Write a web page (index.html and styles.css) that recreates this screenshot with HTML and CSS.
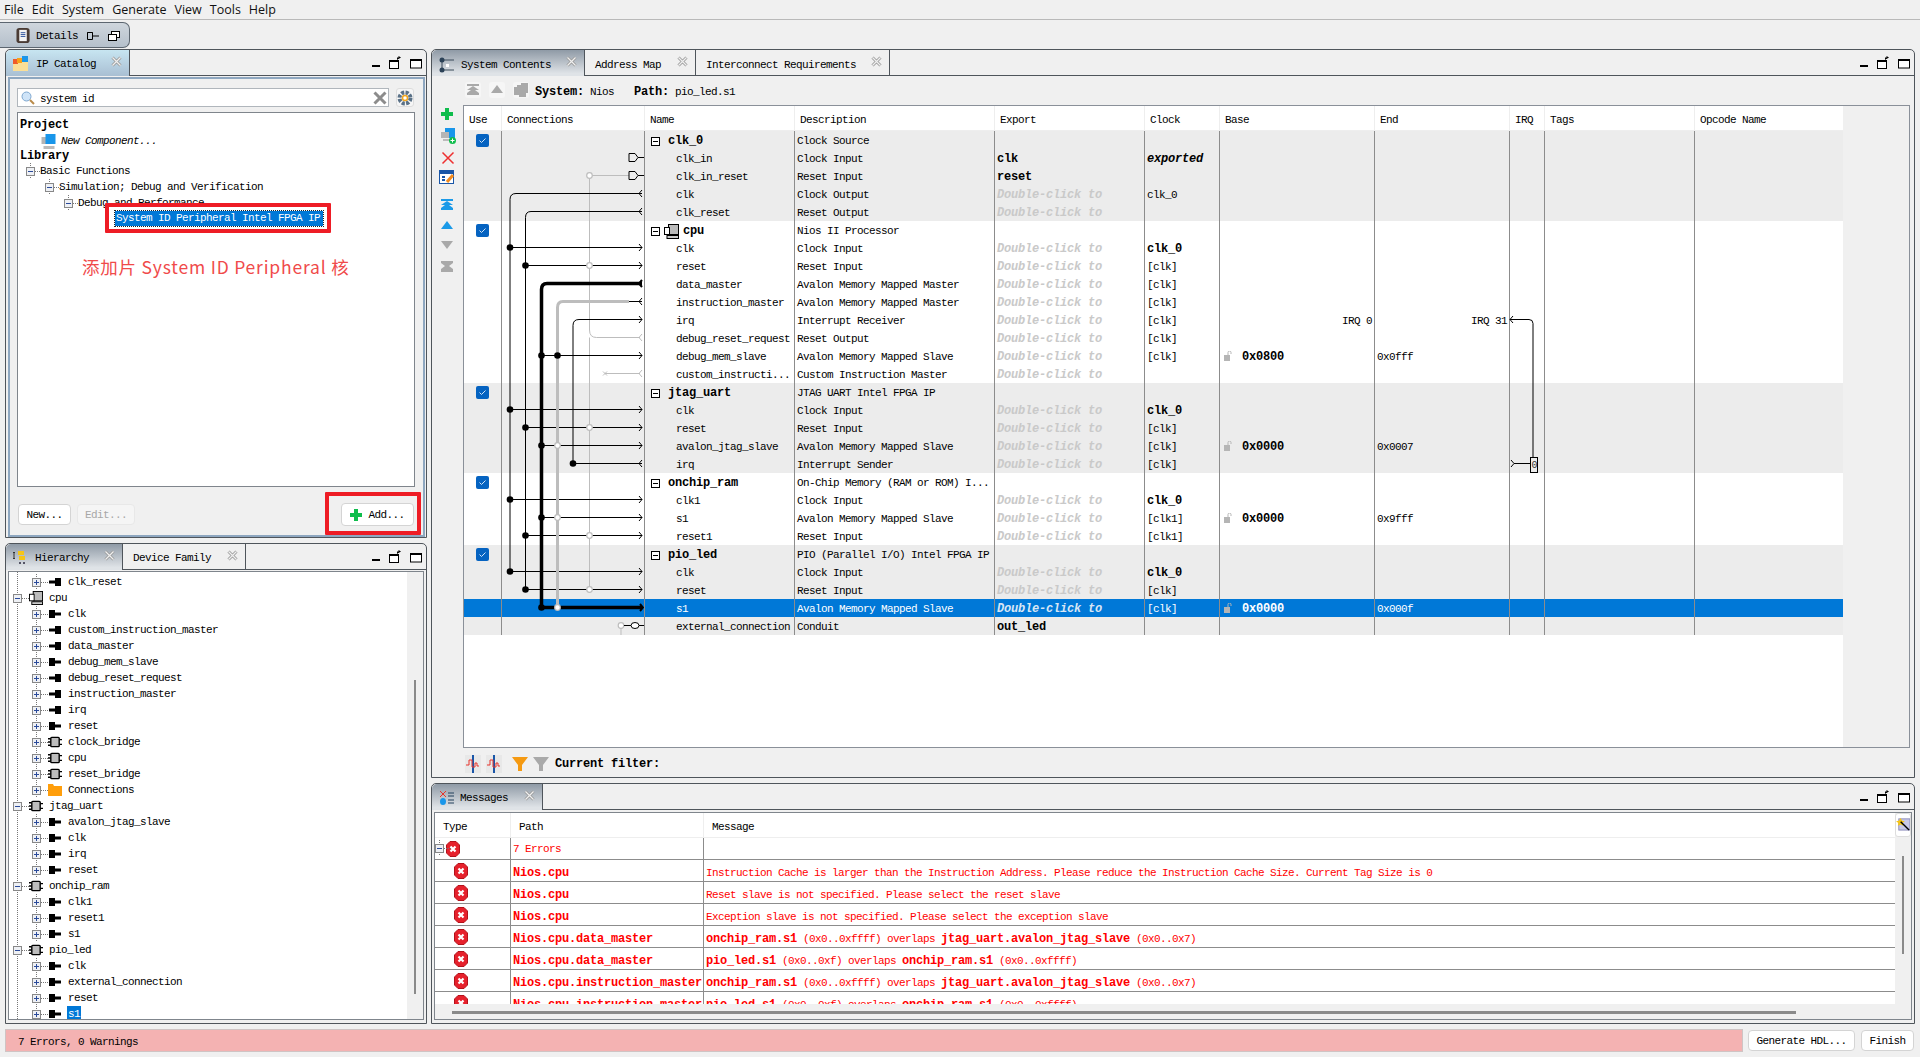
FILE: index.html
```html
<!DOCTYPE html>
<html lang="en">
<head>
<meta charset="utf-8">
<title>Platform Designer</title>
<link rel="stylesheet" href="styles.css">
</head>
<body>
<svg class="defs" aria-hidden="true">
  <symbol id="close" viewBox="0 0 11 11"><path d="M1.5 1.5l8 8M9.5 1.5l-8 8" stroke="#9a9a9a" stroke-width="3" fill="none"/><path d="M1.5 1.5l8 8M9.5 1.5l-8 8" stroke="#f0f0f0" stroke-width="1.2" fill="none"/></symbol>
  <symbol id="min" viewBox="0 0 10 14"><rect x="1" y="9" width="8" height="2"/></symbol>
  <symbol id="rest" viewBox="0 0 15 14"><rect x="1.5" y="4.5" width="9" height="8" fill="#fff" stroke="#000"/><rect x="1" y="4" width="10" height="2"/><path d="M9 4V1.5h3M10.5 0l2.5 1.5-2.5 1.5z"/></symbol>
  <symbol id="max" viewBox="0 0 13 14"><rect x=".5" y="3.5" width="11" height="8.5" fill="#fff" stroke="#000"/><rect y="3" width="12" height="2"/></symbol>
  <symbol id="plus" viewBox="0 0 12 12"><path d="M4 0h4v4h4v4H8v4H4V8H0V4h4z" fill="#0fbd4c"/></symbol>
  <symbol id="mbox" viewBox="0 0 9 9"><rect x=".5" y=".5" width="8" height="8" fill="#fff" stroke="#000"/><path d="M2 4.5h5" stroke="#000"/></symbol>
  <symbol id="tp" viewBox="0 0 16 16"><path d="M4.5 0v16M9 8.5h7" stroke="#777" stroke-dasharray="1 1" fill="none"/><rect x=".5" y="4.5" width="8" height="8" fill="#eef0f4" stroke="#888"/><path d="M2 8.5h5M4.5 6v5" stroke="#2a4a9a" fill="none"/></symbol>
  <symbol id="tm" viewBox="0 0 16 16"><path d="M4.5 0v16M9 8.5h7" stroke="#777" stroke-dasharray="1 1" fill="none"/><rect x=".5" y="4.5" width="8" height="8" fill="#eef0f4" stroke="#888"/><path d="M2 8.5h5" stroke="#2a4a9a" fill="none"/></symbol>
  <symbol id="pin" viewBox="0 0 14 14"><path d="M1 3h6v2.500h6v3H7V11H1z"/></symbol>
  <symbol id="pout" viewBox="0 0 14 14"><path d="M13 3H7v2.500H1v3h6V11h6z"/></symbol>
  <symbol id="comp" viewBox="0 0 15 14"><path d="M0 3.500h3M0 7h3M0 10.500h3M12 4.500h3M12 9.500h3" stroke="#000" stroke-width="1.500"/><rect x="3" y="2" width="9" height="10" rx="1" fill="#bdbdbd" stroke="#000" stroke-width="1.500"/></symbol>
  <symbol id="cpu" viewBox="0 0 15 15"><rect x="4.500" y=".5" width="10" height="10" fill="#bbb" stroke="#000"/><rect x=".5" y="3.500" width="5" height="7" fill="#fff" stroke="#000"/><rect x="3" y="11.500" width="11.500" height="3" fill="#ccc" stroke="#000"/></symbol>
  <symbol id="folder" viewBox="0 0 14 12"><path d="M0 0h5l1 2h8v10H0z" fill="#ff9e0b"/></symbol>
  <symbol id="err" viewBox="0 0 14 16"><path d="M4 .5h6L13.500 4v8L10 15.500H4L.5 12V4z" fill="#e6212c" stroke="#b3121b"/><path d="M4.500 5.500l5 5M9.500 5.500l-5 5" stroke="#fff" stroke-width="2.200"/></symbol>
  <symbol id="check" viewBox="0 0 13 13"><rect width="13" height="13" rx="2" fill="#0563c1"/><path d="M3.500 6.500l2 2 4-4" stroke="#cfe3f8" fill="none"/></symbol>
  <symbol id="lock" viewBox="0 0 9 10"><rect y="4" width="6" height="6" fill="#b5b5b5"/><path d="M4 4V1.500a1.500 1.500 0 0 1 3 0V3" stroke="#b5b5b5" fill="none"/></symbol>
  <symbol id="atop" viewBox="0 0 12 11"><path d="M0 0h12v2H0zM6 2l6 4v0H8l4 3v2H0V9l4-3H0z" fill="currentColor"/></symbol>
  <symbol id="aup" viewBox="0 0 12 9"><path d="M6 0l6 8H0z" fill="currentColor"/></symbol>
  <symbol id="adn" viewBox="0 0 12 9"><path d="M0 0h12L6 8z" fill="currentColor"/></symbol>
  <symbol id="abot" viewBox="0 0 12 11"><path d="M0 0h12v2L8 5l4 3v3H0V8l4-3-4-3z" fill="currentColor"/></symbol>
  <symbol id="addc" viewBox="0 0 16 16"><rect x="5" y="0" width="10" height="10" fill="#1996ea"/><rect x="1" y="4" width="8" height="6" fill="#b5b5b5"/><rect x="3" y="11" width="9" height="2" fill="#bbb"/><circle cx="12.500" cy="12.500" r="3.500" fill="#0fbd4c"/><path d="M10.500 12.500h4M12.500 10.500v4" stroke="#fff"/></symbol>
  <symbol id="edit" viewBox="0 0 16 14"><rect x=".5" y=".5" width="14" height="13" fill="#fff" stroke="#1a56a8"/><rect x="1" y="1" width="13" height="3" fill="#1a56a8"/><path d="M3 7h3M3 10h3" stroke="#1a56a8" stroke-width="2"/><path d="M8 12l6-7" stroke="#f28a1e" stroke-width="3"/></symbol>
  <symbol id="wave" viewBox="0 0 16 18"><rect width="16" height="18" fill="#e8e8e8"/><path d="M8 0v18" stroke="#1a56a8" stroke-width="2"/><path d="M1 10h3V5h3v7h3V8h2v3h2" stroke="#e8352c" fill="none"/></symbol>
  <symbol id="funnel" viewBox="0 0 16 16"><path d="M0 1h16l-6 8v6H6V9z" fill="currentColor"/></symbol>
</svg>

<header class="menubar"><span>File</span><span>Edit</span><span>System</span><span>Generate</span><span>View</span><span>Tools</span><span>Help</span></header>

<div class="fastbar">
  <div class="details">
    <svg class="ic15" viewBox="0 0 15 16"><rect width="14" height="16" rx="3" fill="#4a3b34"/><rect x="3" y="2" width="8" height="12" fill="#f3f3f3"/><path d="M4.500 5h5M4.500 7h5M4.500 9h5" stroke="#2a4f9a"/></svg>
    <span>Details</span>
    <svg class="ic12 fast1" viewBox="0 0 12 10"><path d="M.5 1.500h5v7h-5zM5.500 5H12M.5 1.500h5" fill="none" stroke="#000"/></svg>
    <svg class="ic12" viewBox="0 0 12 10"><rect x="3.500" y=".5" width="8" height="6" fill="#fff" stroke="#000"/><rect x=".5" y="3.500" width="8" height="6" fill="#fff" stroke="#000"/></svg>
  </div>
</div>

<main class="workspace">
  <div class="leftcol">
    <section class="panel ip">
      <div class="tabs">
        <div class="tab on-blue tw-ip">
          <svg class="ic15" viewBox="0 0 15 15"><rect y="6" width="15" height="9" fill="#fbdf97"/><rect y="3" width="5" height="5" fill="#ef5b2a"/><rect x="4" y="2" width="5" height="5" fill="#f7a11a"/><rect x="9" width="6" height="6" fill="#1996ea"/></svg>
          <span>IP Catalog</span><svg class="x"><use href="#close"/></svg>
        </div>
        <div class="winctl"><svg class="w10"><use href="#min"/></svg><svg class="w15"><use href="#rest"/></svg><svg class="w13"><use href="#max"/></svg></div>
      </div>
      <div class="ipbody">
        <div class="searchrow">
          <div class="search">
            <svg class="ic14" viewBox="0 0 14 14"><circle cx="5.500" cy="5.500" r="4.500" fill="#cfe4f8" stroke="#7fa8d0"/><path d="M9 9l4 4" stroke="#b98b4a" stroke-width="2"/></svg>
            <span>system id</span>
            <svg class="ic14 clear" viewBox="0 0 14 14"><path d="M1.500 1.500l11 11M12.500 1.500l-11 11" stroke="#8c8c8c" stroke-width="3"/></svg>
          </div>
          <div class="gear"><svg class="ic16" viewBox="0 0 16 16"><circle cx="8" cy="8" r="5.500" fill="none" stroke="#5a7187" stroke-width="4" stroke-dasharray="3 1.300"/><circle cx="8" cy="8" r="2.500" fill="#fff" stroke="#f2a61e" stroke-width="1.500"/></svg></div>
        </div>
        <div class="iptree">
          <div class="ir b">Project</div>
          <div class="ir p1 it"><svg class="ic15" viewBox="0 0 14 15"><rect y="3" width="7" height="7" fill="#b5b5b5"/><rect x="4" width="10" height="10" fill="#1996ea"/><rect x="2" y="12" width="11" height="3" fill="#bbb"/></svg><span>New Component...</span></div>
          <div class="ir b lib">Library</div>
          <div class="ir p2"><svg class="tb"><use href="#tm"/></svg><span>Basic Functions</span></div>
          <div class="ir p3"><svg class="tb"><use href="#tm"/></svg><span>Simulation; Debug and Verification</span></div>
          <div class="ir p4"><svg class="tb"><use href="#tm"/></svg><span>Debug and Performance</span></div>
          <div class="annot-box">
            <span class="selitem">System ID Peripheral Intel FPGA IP</span>
          </div>
          <div class="annot-text">添加片 System ID Peripheral 核</div>
        </div>
        <div class="btnrow">
          <button class="btn bnew">New...</button>
          <button class="btn bedit">Edit...</button>
          <div class="addmark"><button class="btn badd"><svg class="w12"><use href="#plus"/></svg>Add...</button></div>
        </div>
      </div>
    </section>

    <section class="panel hier">
      <div class="tabs">
        <div class="tab on tw-hi">
          <svg class="ic14" viewBox="0 0 14 14"><path d="M1 1v7M0 2l1-1 1 1M0 7l1 1 1-1" stroke="#333" fill="none"/><rect x="5" y="0" width="6" height="4" fill="#f5c518"/><rect x="6" y="5" width="6" height="4" fill="#f5c518"/><path d="M6 12h6" stroke="#556" stroke-width="2" stroke-dasharray="2 2"/></svg>
          <span>Hierarchy</span><svg class="x"><use href="#close"/></svg>
        </div>
        <div class="tab tw-df"><span>Device Family</span><svg class="x"><use href="#close"/></svg></div>
        <div class="winctl"><svg class="w10"><use href="#min"/></svg><svg class="w15"><use href="#rest"/></svg><svg class="w13"><use href="#max"/></svg></div>
      </div>
      <div class="hbox">
        <div class="htree">
          <div class="hr k"><svg class="tb"><use href="#tp"/></svg><svg class="hi"><use href="#pout"/></svg><span>clk_reset</span></div>
          <div class="hr"><svg class="tb"><use href="#tm"/></svg><svg class="hi"><use href="#cpu"/></svg><span>cpu</span></div>
          <div class="hr k"><svg class="tb"><use href="#tp"/></svg><svg class="hi"><use href="#pin"/></svg><span>clk</span></div>
          <div class="hr k"><svg class="tb"><use href="#tp"/></svg><svg class="hi"><use href="#pout"/></svg><span>custom_instruction_master</span></div>
          <div class="hr k"><svg class="tb"><use href="#tp"/></svg><svg class="hi"><use href="#pout"/></svg><span>data_master</span></div>
          <div class="hr k"><svg class="tb"><use href="#tp"/></svg><svg class="hi"><use href="#pin"/></svg><span>debug_mem_slave</span></div>
          <div class="hr k"><svg class="tb"><use href="#tp"/></svg><svg class="hi"><use href="#pout"/></svg><span>debug_reset_request</span></div>
          <div class="hr k"><svg class="tb"><use href="#tp"/></svg><svg class="hi"><use href="#pout"/></svg><span>instruction_master</span></div>
          <div class="hr k"><svg class="tb"><use href="#tp"/></svg><svg class="hi"><use href="#pout"/></svg><span>irq</span></div>
          <div class="hr k"><svg class="tb"><use href="#tp"/></svg><svg class="hi"><use href="#pin"/></svg><span>reset</span></div>
          <div class="hr k"><svg class="tb"><use href="#tp"/></svg><svg class="hi"><use href="#comp"/></svg><span>clock_bridge</span></div>
          <div class="hr k"><svg class="tb"><use href="#tp"/></svg><svg class="hi"><use href="#comp"/></svg><span>cpu</span></div>
          <div class="hr k"><svg class="tb"><use href="#tp"/></svg><svg class="hi"><use href="#comp"/></svg><span>reset_bridge</span></div>
          <div class="hr k"><svg class="tb"><use href="#tp"/></svg><svg class="hi"><use href="#folder"/></svg><span>Connections</span></div>
          <div class="hr"><svg class="tb"><use href="#tm"/></svg><svg class="hi"><use href="#comp"/></svg><span>jtag_uart</span></div>
          <div class="hr k"><svg class="tb"><use href="#tp"/></svg><svg class="hi"><use href="#pin"/></svg><span>avalon_jtag_slave</span></div>
          <div class="hr k"><svg class="tb"><use href="#tp"/></svg><svg class="hi"><use href="#pin"/></svg><span>clk</span></div>
          <div class="hr k"><svg class="tb"><use href="#tp"/></svg><svg class="hi"><use href="#pin"/></svg><span>irq</span></div>
          <div class="hr k"><svg class="tb"><use href="#tp"/></svg><svg class="hi"><use href="#pin"/></svg><span>reset</span></div>
          <div class="hr"><svg class="tb"><use href="#tm"/></svg><svg class="hi"><use href="#comp"/></svg><span>onchip_ram</span></div>
          <div class="hr k"><svg class="tb"><use href="#tp"/></svg><svg class="hi"><use href="#pin"/></svg><span>clk1</span></div>
          <div class="hr k"><svg class="tb"><use href="#tp"/></svg><svg class="hi"><use href="#pin"/></svg><span>reset1</span></div>
          <div class="hr k"><svg class="tb"><use href="#tp"/></svg><svg class="hi"><use href="#pin"/></svg><span>s1</span></div>
          <div class="hr"><svg class="tb"><use href="#tm"/></svg><svg class="hi"><use href="#comp"/></svg><span>pio_led</span></div>
          <div class="hr k"><svg class="tb"><use href="#tp"/></svg><svg class="hi"><use href="#pin"/></svg><span>clk</span></div>
          <div class="hr k"><svg class="tb"><use href="#tp"/></svg><svg class="hi"><use href="#pin"/></svg><span>external_connection</span></div>
          <div class="hr k"><svg class="tb"><use href="#tp"/></svg><svg class="hi"><use href="#pin"/></svg><span>reset</span></div>
          <div class="hr k"><svg class="tb"><use href="#tp"/></svg><svg class="hi"><use href="#pin"/></svg><span class="hsel">s1</span></div>
        </div>
        <div class="hscroll"><div class="hthumb"></div></div>
      </div>
    </section>
  </div>

  <div class="rightcol">
    <section class="panel contents">
      <div class="tabs">
        <div class="tab on tw-sc">
          <svg class="ic16" viewBox="0 0 16 16"><path d="M3 3h12M3 13h12M3 3v10" stroke="#3a4a5a" fill="none"/><circle cx="3" cy="3" r="2.500" fill="#2c4258"/><circle cx="3" cy="13" r="2.500" fill="#2c4258"/><rect x="7" y="7" width="3" height="3" fill="#fff"/></svg>
          <span>System Contents</span><svg class="x"><use href="#close"/></svg>
        </div>
        <div class="tab tw-am"><span>Address Map</span><svg class="x"><use href="#close"/></svg></div>
        <div class="tab tw-ir"><span>Interconnect Requirements</span><svg class="x"><use href="#close"/></svg></div>
        <div class="winctl"><svg class="w10"><use href="#min"/></svg><svg class="w15"><use href="#rest"/></svg><svg class="w13"><use href="#max"/></svg></div>
      </div>
      <div class="cbody">
        <aside class="side">
          <svg class="w12 s1"><use href="#plus"/></svg>
          <svg class="ic16 s2"><use href="#addc"/></svg>
          <svg class="ic14 s3" viewBox="0 0 14 14"><path d="M1.500 1.500l11 11M12.500 1.500l-11 11" stroke="#ee3030" stroke-width="1.500"/></svg>
          <svg class="ic16 s4"><use href="#edit"/></svg>
          <svg class="w12a cy s5"><use href="#atop"/></svg>
          <svg class="w12b cy s6"><use href="#aup"/></svg>
          <svg class="w12b gy s6"><use href="#adn"/></svg>
          <svg class="w12a gy s6"><use href="#abot"/></svg>
        </aside>
        <div class="cmain">
          <div class="toolbar">
            <div class="tbtn"><svg class="w12a gy"><use href="#atop"/></svg></div>
            <div class="tbtn"><svg class="w12b gy"><use href="#aup"/></svg></div>
            <div class="tbtn"><svg class="ic14 gy" viewBox="0 0 14 14"><path d="M3 2h4V0h7v10h-2v4H5v-2H0V4h3z" fill="currentColor"/></svg></div>
            <span class="crumb"><b>System:</b> Nios</span>
            <span class="crumb c2"><b>Path:</b> pio_led.s1</span>
          </div>
          <div class="frame">
            <div class="tablewrap">
              <table class="sys">
                <colgroup><col class="c1"><col class="c2w"><col class="c3"><col class="c4"><col class="c5"><col class="c6"><col class="c7"><col class="c8"><col class="c9"><col class="c10"><col class="c11"></colgroup>
                <thead><tr><th>Use</th><th>Connections</th><th>Name</th><th>Description</th><th>Export</th><th>Clock</th><th>Base</th><th>End</th><th>IRQ</th><th>Tags</th><th>Opcode Name</th></tr></thead>
                <tbody>
<tr class="g"><td class="u"><svg class="cb"><use href="#check"/></svg></td><td></td><td><span class="gn"><svg class="mb"><use href="#mbox"/></svg>clk_0</span></td><td>Clock Source</td><td></td><td></td><td></td><td></td><td></td><td></td><td></td></tr>
<tr class="g"><td></td><td></td><td class="n">clk_in</td><td>Clock Input</td><td class="e">clk</td><td class="ex">exported</td><td></td><td></td><td></td><td></td><td></td></tr>
<tr class="g"><td></td><td></td><td class="n">clk_in_reset</td><td>Reset Input</td><td class="e">reset</td><td></td><td></td><td></td><td></td><td></td><td></td></tr>
<tr class="g"><td></td><td></td><td class="n">clk</td><td>Clock Output</td><td class="dc">Double-click to</td><td>clk_0</td><td></td><td></td><td></td><td></td><td></td></tr>
<tr class="g"><td></td><td></td><td class="n">clk_reset</td><td>Reset Output</td><td class="dc">Double-click to</td><td></td><td></td><td></td><td></td><td></td><td></td></tr>
<tr class="w"><td class="u"><svg class="cb"><use href="#check"/></svg></td><td></td><td><span class="gn"><svg class="mb"><use href="#mbox"/></svg><svg class="cpui"><use href="#cpu"/></svg>cpu</span></td><td>Nios II Processor</td><td></td><td></td><td></td><td></td><td></td><td></td><td></td></tr>
<tr class="w"><td></td><td></td><td class="n">clk</td><td>Clock Input</td><td class="dc">Double-click to</td><td class="e">clk_0</td><td></td><td></td><td></td><td></td><td></td></tr>
<tr class="w"><td></td><td></td><td class="n">reset</td><td>Reset Input</td><td class="dc">Double-click to</td><td>[clk]</td><td></td><td></td><td></td><td></td><td></td></tr>
<tr class="w"><td></td><td></td><td class="n">data_master</td><td>Avalon Memory Mapped Master</td><td class="dc">Double-click to</td><td>[clk]</td><td></td><td></td><td></td><td></td><td></td></tr>
<tr class="w"><td></td><td></td><td class="n">instruction_master</td><td>Avalon Memory Mapped Master</td><td class="dc">Double-click to</td><td>[clk]</td><td></td><td></td><td></td><td></td><td></td></tr>
<tr class="w"><td></td><td></td><td class="n">irq</td><td>Interrupt Receiver</td><td class="dc">Double-click to</td><td>[clk]</td><td class="ra">IRQ 0</td><td class="ra">IRQ 31</td><td></td><td></td><td></td></tr>
<tr class="w"><td></td><td></td><td class="n">debug_reset_request</td><td>Reset Output</td><td class="dc">Double-click to</td><td>[clk]</td><td></td><td></td><td></td><td></td><td></td></tr>
<tr class="w"><td></td><td></td><td class="n">debug_mem_slave</td><td>Avalon Memory Mapped Slave</td><td class="dc">Double-click to</td><td>[clk]</td><td class="ba"><svg class="lk"><use href="#lock"/></svg>0x0800</td><td>0x0fff</td><td></td><td></td><td></td></tr>
<tr class="w"><td></td><td></td><td class="n">custom_instructi...</td><td>Custom Instruction Master</td><td class="dc">Double-click to</td><td></td><td></td><td></td><td></td><td></td><td></td></tr>
<tr class="g"><td class="u"><svg class="cb"><use href="#check"/></svg></td><td></td><td><span class="gn"><svg class="mb"><use href="#mbox"/></svg>jtag_uart</span></td><td>JTAG UART Intel FPGA IP</td><td></td><td></td><td></td><td></td><td></td><td></td><td></td></tr>
<tr class="g"><td></td><td></td><td class="n">clk</td><td>Clock Input</td><td class="dc">Double-click to</td><td class="e">clk_0</td><td></td><td></td><td></td><td></td><td></td></tr>
<tr class="g"><td></td><td></td><td class="n">reset</td><td>Reset Input</td><td class="dc">Double-click to</td><td>[clk]</td><td></td><td></td><td></td><td></td><td></td></tr>
<tr class="g"><td></td><td></td><td class="n">avalon_jtag_slave</td><td>Avalon Memory Mapped Slave</td><td class="dc">Double-click to</td><td>[clk]</td><td class="ba"><svg class="lk"><use href="#lock"/></svg>0x0000</td><td>0x0007</td><td></td><td></td><td></td></tr>
<tr class="g"><td></td><td></td><td class="n">irq</td><td>Interrupt Sender</td><td class="dc">Double-click to</td><td>[clk]</td><td></td><td></td><td></td><td></td><td></td></tr>
<tr class="w"><td class="u"><svg class="cb"><use href="#check"/></svg></td><td></td><td><span class="gn"><svg class="mb"><use href="#mbox"/></svg>onchip_ram</span></td><td>On-Chip Memory (RAM or ROM) I...</td><td></td><td></td><td></td><td></td><td></td><td></td><td></td></tr>
<tr class="w"><td></td><td></td><td class="n">clk1</td><td>Clock Input</td><td class="dc">Double-click to</td><td class="e">clk_0</td><td></td><td></td><td></td><td></td><td></td></tr>
<tr class="w"><td></td><td></td><td class="n">s1</td><td>Avalon Memory Mapped Slave</td><td class="dc">Double-click to</td><td>[clk1]</td><td class="ba"><svg class="lk"><use href="#lock"/></svg>0x0000</td><td>0x9fff</td><td></td><td></td><td></td></tr>
<tr class="w"><td></td><td></td><td class="n">reset1</td><td>Reset Input</td><td class="dc">Double-click to</td><td>[clk1]</td><td></td><td></td><td></td><td></td><td></td></tr>
<tr class="g"><td class="u"><svg class="cb"><use href="#check"/></svg></td><td></td><td><span class="gn"><svg class="mb"><use href="#mbox"/></svg>pio_led</span></td><td>PIO (Parallel I/O) Intel FPGA IP</td><td></td><td></td><td></td><td></td><td></td><td></td><td></td></tr>
<tr class="g"><td></td><td></td><td class="n">clk</td><td>Clock Input</td><td class="dc">Double-click to</td><td class="e">clk_0</td><td></td><td></td><td></td><td></td><td></td></tr>
<tr class="g"><td></td><td></td><td class="n">reset</td><td>Reset Input</td><td class="dc">Double-click to</td><td>[clk]</td><td></td><td></td><td></td><td></td><td></td></tr>
<tr class="sel"><td></td><td></td><td class="n">s1</td><td>Avalon Memory Mapped Slave</td><td class="dc">Double-click to</td><td>[clk]</td><td class="ba"><svg class="lk"><use href="#lock"/></svg>0x0000</td><td>0x000f</td><td></td><td></td><td></td></tr>
<tr class="g"><td></td><td></td><td class="n">external_connection</td><td>Conduit</td><td class="e">out_led</td><td></td><td></td><td></td><td></td><td></td><td></td></tr>
                </tbody>
              </table>
              <svg class="wires" viewBox="501 131 143 504" fill="none" stroke="#000">
                <g stroke="#bdbdbd">
                  <path d="M589.500 175.500V330q0 7.500 7 7.500H640M589.500 175.500H629M605 373.500H640M621 625.500V635"/>
                  <path d="M642 334l-3 3.500 3 3.500M642 370l-3 3.500 3 3.500M603 371.500l4 4M607 371.500l-4 4"/>
                  <path d="M589.500 337.500V589.500"/>
                </g>
                <g stroke="#000">
                  <path d="M629 153.500h6l3 4-3 4h-6zM638 157.500h6M629 171.500h6l3 4-3 4h-6zM638 175.500h6"/>
                  <path d="M642 193.500H516q-6 0-6 6V571.500M642 211.500H531q-5.500 0-5.500 6V589.500"/>
                  <path d="M642 190l-3 3.500 3 3.500M642 208l-3 3.500 3 3.500"/>
                  <path d="M510 247.500H642M525.500 265.500H642M510 409.500H642M525.500 427.500H642M541.500 445.500H642M510 499.500H642M541.500 517.500H642M525.500 535.500H642M510 571.500H642M525.500 589.500H642M541.500 355.500H642"/>
                  <path d="M639 244l3 3.500-3 3.500M639 262l3 3.500-3 3.500M639 316l3 3.500-3 3.500M639 352l3 3.500-3 3.500M639 406l3 3.500-3 3.500M639 424l3 3.500-3 3.500M639 442l3 3.500-3 3.500M639 496l3 3.500-3 3.500M639 514l3 3.500-3 3.500M639 532l3 3.500-3 3.500M639 568l3 3.500-3 3.500M639 586l3 3.500-3 3.500"/>
                  <path d="M642 319.500H579q-6 0-6 6V463.500H642M642 460l-3 3.500 3 3.500"/>
                </g>
                <g stroke="#bdbdbd" stroke-width="3"><path d="M629 301.500H563q-5.500 0-5.500 6V607.500"/></g>
                <path d="M629 301.500H642M642 298l-3 3.500 3 3.500" stroke="#000"/>
                <path d="M642 283.500H547q-5.500 0-5.500 6V607.500H642" stroke="#000" stroke-width="3.500"/>
                <path d="M642 280l-3 3.500 3 3.500M640 604l3 3.500-3 3.500" stroke="#000" stroke-width="2"/>
                <g fill="#000" stroke="none">
                  <circle cx="510" cy="247.500" r="3.300"/><circle cx="525.500" cy="265.500" r="3.300"/><circle cx="541.500" cy="355.500" r="3.300"/><circle cx="557.500" cy="355.500" r="3.300"/>
                  <circle cx="510" cy="409.500" r="3.300"/><circle cx="525.500" cy="427.500" r="3.300"/><circle cx="541.500" cy="445.500" r="3.300"/><circle cx="573" cy="463.500" r="3.300"/>
                  <circle cx="510" cy="499.500" r="3.300"/><circle cx="541.500" cy="517.500" r="3.300"/><circle cx="525.500" cy="535.500" r="3.300"/>
                  <circle cx="510" cy="571.500" r="3.300"/><circle cx="525.500" cy="589.500" r="3.300"/><circle cx="541.500" cy="607.500" r="3.300"/>
                </g>
                <g fill="#fff" stroke="#bdbdbd" stroke-width="1.200">
                  <circle cx="589.500" cy="175.500" r="2.800"/><circle cx="589.500" cy="265.500" r="2.800"/><circle cx="589.500" cy="427.500" r="2.800"/><circle cx="589.500" cy="535.500" r="2.800"/><circle cx="589.500" cy="589.500" r="2.800"/>
                  <circle cx="557.500" cy="445.500" r="2.800"/><circle cx="557.500" cy="517.500" r="2.800"/><circle cx="557.500" cy="607.500" r="2.800"/><circle cx="621" cy="625.500" r="2.800"/>
                </g>
                <path d="M624 625.500H631M639 625.500H644" stroke="#000"/>
                <ellipse cx="635" cy="625.500" rx="4" ry="3" stroke="#000" fill="#fff"/>
              </svg>
              <svg class="irqw" viewBox="1505 310 40 170" fill="none" stroke="#000">
                <path d="M1510 319.500H1529q4 0 4 4V457M1513 316l-3 3.500 3 3.500M1511 460l3 3.500-3 3.500M1514 463.500H1530"/>
                <rect x="1530.500" y="457.500" width="7" height="15" fill="none"/>
                <text x="1531.500" y="468" class="irqn">0</text>
              </svg>
            </div>
          </div>
          <div class="filterbar">
            <svg class="fi"><use href="#wave"/></svg>
            <svg class="fi f2"><use href="#wave"/></svg>
            <svg class="fu or"><use href="#funnel"/></svg>
            <svg class="fu gy"><use href="#funnel"/></svg>
            <b>Current filter:</b>
          </div>
        </div>
      </div>
    </section>

    <section class="panel messages">
      <div class="tabs">
        <div class="tab on tw-ms">
          <svg class="ic14" viewBox="0 0 14 14"><path d="M0 0l6 6M6 0L0 6" stroke="#e8352c"/><ellipse cx="3" cy="10.500" rx="3" ry="3.500" fill="#1996ea"/><path d="M8 2h6M8 5h6M8 9h6M8 12h6" stroke="#22405c"/></svg>
          <span>Messages</span><svg class="x"><use href="#close"/></svg>
        </div>
        <div class="winctl"><svg class="w10"><use href="#min"/></svg><svg class="w15"><use href="#rest"/></svg><svg class="w13"><use href="#max"/></svg></div>
      </div>
      <div class="mframe">
        <div class="mtop">
          <div class="mclip">
            <table class="msg">
              <colgroup><col class="m1"><col class="m2"><col></colgroup>
              <thead><tr><th>Type</th><th>Path</th><th>Message</th></tr></thead>
              <tbody>
                <tr class="m0"><td><svg class="mb0"><use href="#tm"/></svg><svg class="er er0"><use href="#err"/></svg></td><td>7 Errors</td><td></td></tr>
                <tr><td><svg class="er"><use href="#err"/></svg></td><td><b>Nios.cpu</b></td><td>Instruction Cache is larger than the Instruction Address. Please reduce the Instruction Cache Size. Current Tag Size is 0</td></tr>
                <tr><td><svg class="er"><use href="#err"/></svg></td><td><b>Nios.cpu</b></td><td>Reset slave is not specified. Please select the reset slave</td></tr>
                <tr><td><svg class="er"><use href="#err"/></svg></td><td><b>Nios.cpu</b></td><td>Exception slave is not specified. Please select the exception slave</td></tr>
                <tr><td><svg class="er"><use href="#err"/></svg></td><td><b>Nios.cpu.data_master</b></td><td><b>onchip_ram.s1</b> (0x0..0xffff) overlaps <b>jtag_uart.avalon_jtag_slave</b> (0x0..0x7)</td></tr>
                <tr><td><svg class="er"><use href="#err"/></svg></td><td><b>Nios.cpu.data_master</b></td><td><b>pio_led.s1</b> (0x0..0xf) overlaps <b>onchip_ram.s1</b> (0x0..0xffff)</td></tr>
                <tr><td><svg class="er"><use href="#err"/></svg></td><td><b>Nios.cpu.instruction_master</b></td><td><b>onchip_ram.s1</b> (0x0..0xffff) overlaps <b>jtag_uart.avalon_jtag_slave</b> (0x0..0x7)</td></tr>
                <tr><td><svg class="er"><use href="#err"/></svg></td><td><b>Nios.cpu.instruction_master</b></td><td><b>pio_led.s1</b> (0x0..0xf) overlaps <b>onchip_ram.s1</b> (0x0..0xffff)</td></tr>
              </tbody>
            </table>
          </div>
          <div class="mstrip">
            <div class="wand"><svg class="ic14" viewBox="0 0 15 15"><rect x="3" y="2" width="12" height="12" fill="#c9c9ea" stroke="#8a8ab8"/><path d="M5 1l1.500 3 3 .5-2.500 2 .5 3L5 8l-3 1.500.5-3L0 4.500l3-.5z" fill="#f5c518"/><path d="M5 5l9 9" stroke="#000" stroke-width="1.500"/></svg></div>
            <div class="vthumb"></div>
          </div>
        </div>
        <div class="mh"><div class="mhthumb"></div></div>
      </div>
    </section>
  </div>
</main>

<footer class="statusrow">
  <div class="status">7 Errors, 0 Warnings</div>
  <button class="btn bgen">Generate HDL...</button>
  <button class="btn bfin">Finish</button>
</footer>
</body>
</html>
```

FILE: styles.css
```css
* { box-sizing: border-box; }
html, body { margin: 0; height: 100%; }
body {
  width: 1920px; height: 1057px; overflow: hidden;
  background: #f0f0f0; color: #000;
  font: 11px/16px "Liberation Mono", monospace;
  letter-spacing: -0.6px;
  display: flex; flex-direction: column;
}
b { font-size: 12px; letter-spacing: -0.2px; }
svg { display: block; flex: none; }
.defs { position: absolute; width: 0; height: 0; }

.menubar {
  height: 20px; flex: none; padding: 1px 0 0 4px;
  display: flex; gap: 8px;
  border-bottom: 1px solid #b9b9b9;
  font: 12.500px/18px "Open Sans", sans-serif; letter-spacing: 0; color: #111;
}
.fastbar { height: 29px; flex: none; padding-top: 2px; }
.details {
  width: 130px; height: 26px;
  border: 1px solid #5c6670; border-left: 0; border-radius: 0 7px 7px 0;
  background: linear-gradient(#cfd6dd, #b5c0cb);
  display: flex; align-items: center; padding: 1px 0 0 16px;
}
.details span { margin-left: 5px; width: 51px; }
.fast1 { margin-right: 9px; }
.ic12 { width: 12px; height: 10px; }
.ic14 { width: 14px; height: 14px; }
.ic15 { width: 15px; height: 15px; }
.ic16 { width: 16px; height: 16px; }
.w10 { width: 10px; height: 14px; }
.w13 { width: 13px; height: 14px; }
.w15 { width: 15px; height: 14px; }
.w12 { width: 12px; height: 12px; }
.w12a { width: 12px; height: 11px; }
.w12b { width: 12px; height: 9px; }
.cy { color: #1b9ae8; }
.gy { color: #a9a9a9; }
.or { color: #f59a12; }

.workspace { flex: none; height: 975px; display: flex; padding-left: 5px; gap: 4px; }
.leftcol { width: 422px; display: flex; flex-direction: column; gap: 5px; }
.rightcol { width: 1484px; display: flex; flex-direction: column; gap: 5px; }

.panel {
  border: 1px solid #4f555b; border-radius: 5px 5px 0 0;
  display: flex; flex-direction: column; min-height: 0; position: relative;
}
.ip { height: 489px; }
.hier { height: 481px; }
.contents { height: 729px; }
.messages { height: 241px; }

.tabs { height: 26px; flex: none; display: flex; border-bottom: 1px solid #4f555b; }
.tab {
  height: 26px; display: flex; align-items: center; position: relative;
  border-right: 1px solid #4f555b; padding: 3px 0 0 7px; gap: 6px;
}
.ip .tab, .hier .tab, .messages .tab { padding-top: 1px; }
.tab span { white-space: nowrap; }
.tab .x { width: 11px; height: 11px; position: absolute; top: 6px; right: 7px; }
.tab.on { background: linear-gradient(#8f9aa6, #dfe3e7 90%); border-top-left-radius: 5px; }
.on-blue { background: linear-gradient(#c7e5f1, #a9bfd3); border-top-left-radius: 5px; }
.tw-ip { width: 124px; }
.tw-ip span { margin-left: 2px; }
.tw-hi { width: 117px; }
.tw-hi span { margin-left: 2px; }
.tw-df { width: 123px; padding-left: 10px; }
.tw-sc { width: 153px; }
.tw-am { width: 111px; padding-left: 10px; }
.tw-ir { width: 194px; padding-left: 10px; }
.tw-ms { width: 111px; padding-left: 8px; }
.tw-ms span { margin-left: 0; }
.winctl { margin-left: auto; display: flex; gap: 7px; padding: 6px 3px 0 0; }

.ipbody {
  flex: 1; margin: 1px 1px 0 2px; border: 2px solid #8ea7c0; border-bottom-width: 2px;
  padding: 9px 8px 0 7px; position: relative; display: flex; flex-direction: column;
}
.searchrow { display: flex; gap: 7px; height: 19px; flex: none; }
.search {
  width: 372px; background: #fff; border: 1px solid #b0b6bc;
  display: flex; align-items: center; padding-left: 3px; gap: 5px;
  font-size: 11px;
}
.search span { padding-top: 2px; }
.clear { margin-left: auto; margin-right: 1px; }
.gear { width: 18px; height: 19px; background: #f6f6f6; border: 1px solid #ddd; border-radius: 3px; display: flex; align-items: center; justify-content: center; }
.iptree {
  width: 398px; height: 375px; margin-top: 5px; padding: 4px 0 0 2px;
  background: #fff; border: 1px solid #7f858c; flex: none;
}
.ir { height: 16px; display: flex; align-items: center; white-space: nowrap; }
.ir.b { font-weight: 700; font-size: 12px; letter-spacing: -0.2px; }
.lib { height: 14px !important; }
.p1 { padding-left: 21px; }
.p1 span { margin-left: 5px; }
.it { font-style: italic; }
.p2 { padding-left: 6px; }
.p3 { padding-left: 25px; }
.p4 { padding-left: 44px; }
.tb { width: 16px; height: 16px; }
.ir .tb { margin-right: -2px; }

/* annotations drawn over the catalog tree */
.annot-box {
  position: absolute; left: 95px; top: 124px; width: 226px; height: 30px;
  border: 4px solid #ee1c25; border-radius: 1px; background: #fff;
  display: flex; align-items: center; padding-left: 6px;
}
.selitem { background: #0078d7; color: #fff; outline: 1px dotted #222; width: 208px; height: 15px; line-height: 15px; padding-left: 1px; white-space: nowrap; }
.annot-text {
  position: absolute; left: 72px; top: 176px; white-space: nowrap;
  font: 17.500px/24px "Noto Sans CJK SC", "Noto Sans", sans-serif; letter-spacing: 0.800px; color: #f04a4a;
}

.btnrow { flex: 1; position: relative; }
.btn {
  background: #fff; border: 1px solid #d4d4d4; border-radius: 4px;
  font: inherit; letter-spacing: inherit; color: #000; padding: 0;
  display: flex; align-items: center; justify-content: center;
}
.bnew { position: absolute; left: 1px; top: 17px; width: 53px; height: 21px; }
.bedit { position: absolute; left: 60px; top: 17px; width: 58px; height: 21px; background: #f5f5f5; color: #a7a7a7; border-color: #e8e8e8; }
.addmark {
  position: absolute; left: 308px; top: 5px; width: 96px; height: 43px;
  border: 4px solid #ee1c25; border-radius: 1px; padding: 7px 0 0 12px;
}
.badd { width: 73px; height: 23px; gap: 6px; }

.hbox { flex: 1; margin: 1px 2px 3px 2px; border: 1px solid #7f858c; display: flex; min-height: 0; overflow: hidden; }
.htree {
  width: 398px; padding-top: 2px; background-color: #fff;
  background-image: linear-gradient(#777 50%, transparent 0);
  background-size: 1px 2px; background-repeat: repeat-y; background-position: 8px 0;
}
.hr { height: 16px; display: flex; align-items: center; padding-left: 4px; white-space: nowrap; }
.hr.k { padding-left: 23px; background: none; }
.hi { width: 14px; height: 14px; margin-right: 6px; }
.hsel { background: #0078d7; color: #fff; padding: 0 1px; margin-left: -1px; height: 16px; }
.hscroll { flex: 1; position: relative; }
.hthumb { position: absolute; right: 7px; top: 108px; width: 2px; height: 314px; background: #8a8a8a; }

.cbody { flex: 1; display: flex; min-height: 0; }
.side { width: 31px; flex: none; padding: 32px 0 0 9px; display: flex; flex-direction: column; }
.s1 { margin-bottom: 8px; }
.s2 { margin-bottom: 7px; margin-left: -1px; }
.s3 { margin-bottom: 4px; }
.s4 { margin-bottom: 14px; margin-left: -2px; }
.s5 { margin-bottom: 11px; }
.s6 { margin-bottom: 11px; }
.cmain { flex: 1; display: flex; flex-direction: column; min-width: 0; }
.toolbar { height: 29px; flex: none; display: flex; align-items: center; gap: 8px; padding: 0 0 2px 2px; }
.tbtn { width: 16px; height: 16px; background: #f6f6f6; border-radius: 3px; display: flex; align-items: center; justify-content: center; }
.crumb { margin: 4px 0 0 -2px; white-space: nowrap; }
.crumb.c2 { margin-left: 12px; }

.frame { width: 1447px; height: 643px; flex: none; border: 1px solid #8a9099; background: #fff; position: relative; }
.frame::after { content: ""; position: absolute; left: 1379px; top: 0; bottom: 0; right: 0; background: #f0f0f0; }
.tablewrap { position: relative; z-index: 1; width: 1379px; }
table { border-collapse: separate; border-spacing: 0; table-layout: fixed; }
.sys { width: 1379px; }
.c1 { width: 37px; } .c2w { width: 143px; } .c3 { width: 150px; } .c4 { width: 200px; } .c5 { width: 150px; }
.c6 { width: 75px; } .c7 { width: 155px; } .c8 { width: 135px; } .c9 { width: 35px; } .c10 { width: 150px; } .c11 { width: 149px; }
th { font-weight: 400; text-align: left; padding: 3px 0 0 5px; background: #fff; border-left: 1px solid #eee; border-bottom: 1px solid #eee; }
th:first-child { border-left: 0; }
.sys th { height: 25px; }
.sys td { height: 18px; padding: 2px 0 0 2px; line-height: 16px; border-left: 1px solid #8c8c8c; white-space: nowrap; overflow: hidden; }
.sys td:first-child { border-left: 0; }
.sys .g td { background: #ececec; }
.sys .w td { background: #fff; }
.sys .sel td { background: #0078d7; color: #fff; }
.sys td.u { padding: 0 0 0 12px; }
.cb { width: 13px; height: 13px; margin-top: 1px; }
.gn { display: flex; align-items: center; font-weight: 700; font-size: 12px; letter-spacing: -0.2px; padding-left: 4px; height: 16px; }
.mb { width: 9px; height: 9px; margin-right: 8px; }
.cpui { width: 15px; height: 15px; margin: 0 4px 0 -4px; }
.sys td.n { padding-left: 31px; }
.sys td.e, .sys td.ba, .ex { font-weight: 700; font-size: 12px; letter-spacing: -0.2px; }
.sys td.ex { font-style: italic; line-height: 15px; padding-top: 3px; }
.sys td.dc { font-weight: 700; font-style: italic; font-size: 12px; letter-spacing: -0.2px; color: #c9c9c9; line-height: 15px; padding-top: 3px; }
.sys .sel td.dc { color: #d8e6f5; }
.sys td.ra { text-align: right; padding: 2px 2px 0 0; }
.sys td.ba { padding-left: 4px; }
.lk { display: inline-block; width: 9px; height: 10px; margin-right: 9px; vertical-align: -1px; }
.wires { position: absolute; left: 37px; top: 25px; width: 143px; height: 504px; }
.irqw { position: absolute; left: 1041px; top: 204px; width: 40px; height: 170px; }
.irqw rect { stroke: #000; }
.irqn { font-size: 10px; fill: #333; stroke: none; }

.filterbar { flex: 1; display: flex; align-items: center; padding: 2px 0 0 2px; }
.fi { width: 16px; height: 18px; margin-right: 5px; }
.f2 { margin-right: 10px; }
.fu { width: 16px; height: 16px; margin-right: 5px; }
.filterbar .gy { margin-right: 6px; }

.mframe { flex: 1; margin: 2px 2px 3px 2px; border: 1px solid #7f858c; display: flex; flex-direction: column; min-height: 0; }
.mtop { height: 191px; flex: none; display: flex; }
.mclip { width: 1460px; background: #fff; overflow: hidden; }
.msg { width: 1460px; color: #f00; }
.m1 { width: 75px; } .m2 { width: 193px; }
.msg th { height: 25px; color: #000; padding-left: 8px; }
.msg td { height: 22px; padding: 4px 0 0 2px; border-left: 1px solid #8c8c8c; border-bottom: 1px solid #8c8c8c; white-space: nowrap; overflow: hidden; }
.msg .m0 td { padding-top: 0; }
.msg td:first-child { border-left: 0; padding: 0 0 0 19px; }
.msg .m0 td:first-child { padding-left: 0; position: relative; }
.mb0 { width: 16px; height: 16px; position: absolute; left: 0; top: 2px; }
.er { width: 14px; height: 16px; }
.er0 { margin-left: 11px; }
.mstrip { flex: 1; position: relative; }
.wand { width: 16px; height: 24px; background: #fff; border: 1px solid #ddd; border-radius: 3px; padding-top: 3px; }
.vthumb { position: absolute; left: 7px; top: 43px; width: 2px; height: 98px; background: #8a8a8a; }
.mh { flex: 1; position: relative; }
.mhthumb { position: absolute; left: 17px; top: 7px; width: 1344px; height: 3px; background: #8a8a8a; }

.statusrow { flex: none; margin-top: 5px; height: 23px; padding-left: 5px; display: flex; gap: 5px; }
.status { width: 1738px; background: #f4b2b2; border: 1px solid #cfc4c4; padding: 1px 0 0 12px; line-height: 22px; }
.bgen { width: 107px; height: 21px; margin-top: 1px; }
.bfin { width: 53px; height: 21px; margin-top: 1px; margin-left: 1px; }
```
